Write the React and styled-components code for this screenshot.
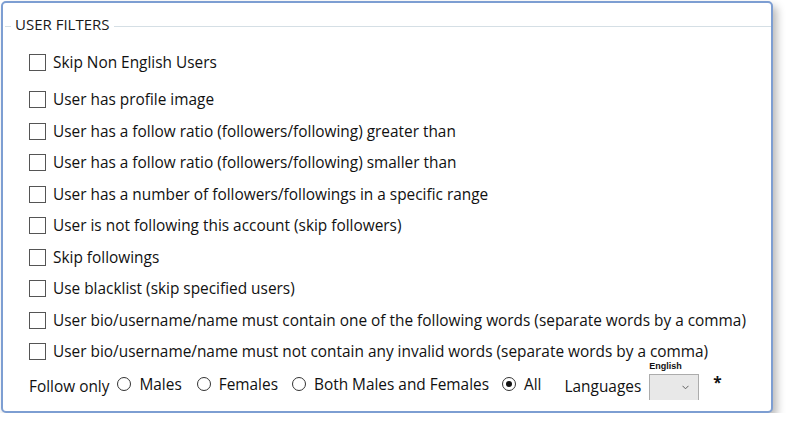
import React from 'react';
import styled, { createGlobalStyle } from 'styled-components';

const GlobalStyle = createGlobalStyle`
	body {
		margin: 0;
		background: #ffffff;
		font-family: 'Open Sans', 'Noto Sans', sans-serif;
		color: #000000;
	}
`;

const Panel = styled.div`
	box-sizing: border-box;
	margin: 1px 0 0 1px;
	width: 772px;
	height: 412px;
	border: 2px solid #7d9ed2;
	border-radius: 5px;
	background: #ffffff;
	box-shadow: 4px 5px 9px rgba(0, 0, 0, 0.28);
	display: flex;
	flex-direction: column;
`;

const Header = styled.div`
	display: flex;
	align-items: flex-start;
	height: 37px;
	padding-left: 2px;
`;

const HeaderLine = styled.div`
	height: 1px;
	background: #d5dfe5;
	margin-top: 23px;
	width: ${(p) => (p.$grow ? 'auto' : '6px')};
	flex: ${(p) => (p.$grow ? '1' : 'none')};
`;

const HeaderText = styled.div`
	font-size: 15px;
	line-height: 20px;
	padding: 11px 4px 0 4px;
	color: #1a1a1a;
`;

const List = styled.div`
	display: flex;
	flex-direction: column;
	padding-left: 26px;
`;

const Row = styled.label`
	display: flex;
	align-items: center;
	height: ${(p) => p.$h || 31.5}px;
	gap: 7px;
	font-size: 15.4px;
	color: #111111;
`;

const Box = styled.span`
	box-sizing: border-box;
	width: 17px;
	height: 17px;
	border: 1px solid #555555;
	background: #ffffff;
	flex: none;
`;

const Bottom = styled.div`
	display: flex;
	align-items: center;
	height: 32px;
	padding-left: 26px;
	font-size: 15.4px;
	color: #111111;
	margin-top: 0.5px;
`;

const FollowLabel = styled.span`
	margin-top: 5px;
	margin-right: 8px;
`;

const RadioItem = styled.span`
	display: flex;
	align-items: center;
	gap: 8px;
	margin-right: ${(p) => p.$mr}px;
`;

const Circle = styled.span`
	box-sizing: border-box;
	width: 14px;
	height: 14px;
	border-radius: 50%;
	border: 1px solid #333333;
	display: flex;
	align-items: center;
	justify-content: center;
	&::after {
		content: '';
		display: ${(p) => (p.$on ? 'block' : 'none')};
		width: 6px;
		height: 6px;
		border-radius: 50%;
		background: #111111;
	}
`;

const LangLabel = styled.span`
	margin-left: 8px;
	margin-top: 5px;
	margin-right: 8px;
`;

const ComboWrap = styled.div`
	display: flex;
	flex-direction: column;
	align-self: flex-start;
	margin-top: -7px;
`;

const ComboCaption = styled.span`
	font-family: 'Liberation Sans', Arial, sans-serif;
	font-size: 9px;
	font-weight: bold;
	line-height: 10px;
	height: 13px;
`;

const Combo = styled.div`
	box-sizing: border-box;
	width: 50px;
	height: 26px;
	border: 1px solid #acacac;
	border-bottom: none;
	background: #e8e8e8;
	display: flex;
	align-items: center;
	justify-content: flex-end;
	padding-right: 9px;
`;

const Star = styled.span`
	margin-left: 14px;
	font-weight: bold;
	margin-top: -3px;
`;

const items = [
	'Skip Non English Users',
	'User has profile image',
	'User has a follow ratio (followers/following) greater than',
	'User has a follow ratio (followers/following) smaller than',
	'User has a number of followers/followings in a specific range',
	'User is not following this account (skip followers)',
	'Skip followings',
	'Use blacklist (skip specified users)',
	'User bio/username/name must contain one of the following words (separate words by a comma)',
	'User bio/username/name must not contain any invalid words (separate words by a comma)',
];

const radios = [
	{ label: 'Males', mr: 15 },
	{ label: 'Females', mr: 14 },
	{ label: 'Both Males and Females', mr: 13 },
	{ label: 'All', mr: 15 },
];

const App = () => {
	return (
		<>
			<GlobalStyle />
			<Panel>
				<Header>
					<HeaderLine />
					<HeaderText>USER FILTERS</HeaderText>
					<HeaderLine $grow />
				</Header>
				<List>
					{items.map((text, i) => (
						<Row key={text} $h={i === 0 ? 44 : undefined}>
							<Box />
							{text}
						</Row>
					))}
				</List>
				<Bottom>
					<FollowLabel>Follow only</FollowLabel>
					{radios.map((r) => (
						<RadioItem key={r.label} $mr={r.mr}>
							<Circle $on={r.label === 'All'} />
							{r.label}
						</RadioItem>
					))}
					<LangLabel>Languages</LangLabel>
					<ComboWrap>
						<ComboCaption>English</ComboCaption>
						<Combo>
							<svg width="7" height="5" viewBox="0 0 7 5">
								<path d="M0.5 0.8 L3.5 3.8 L6.5 0.8" fill="none" stroke="#606060" strokeWidth="1" />
							</svg>
						</Combo>
					</ComboWrap>
					<Star>*</Star>
				</Bottom>
			</Panel>
		</>
	);
};

export default App;
